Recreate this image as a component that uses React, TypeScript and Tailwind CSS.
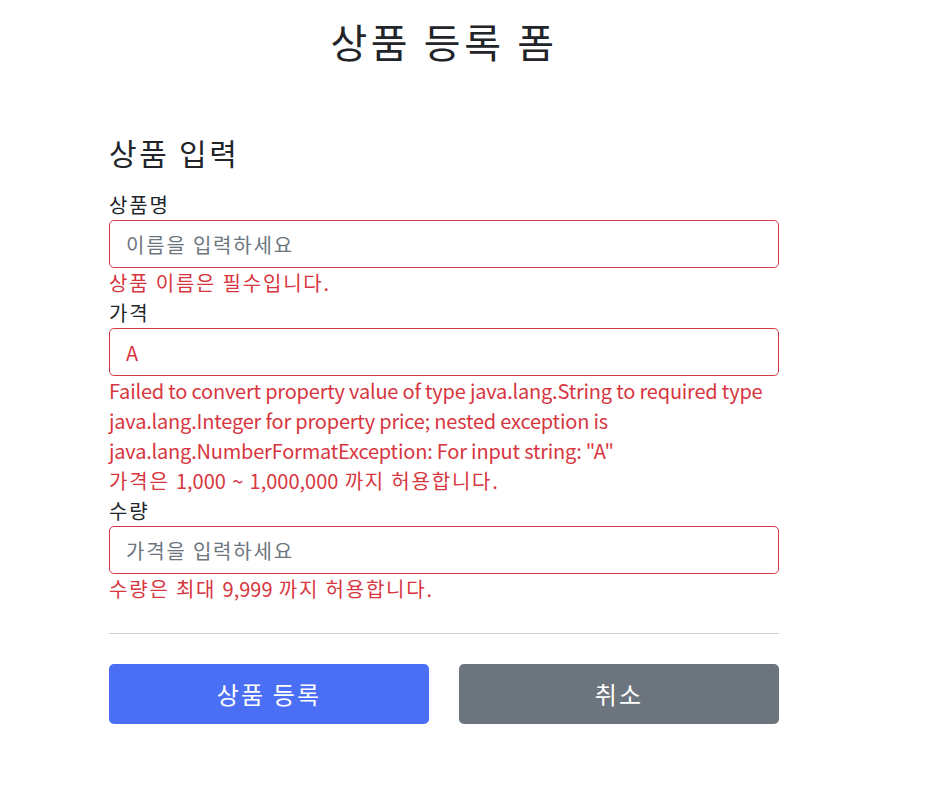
// Korean glyphs (and spaces) in the reference are wider than Noto's, so those runs get a little tracking
const HANGUL = /[\uac00-\ud7a3]/;

const K = ({ text }: { text: string }) => {
  if (!HANGUL.test(text)) return <span className="tracking-[-0.01em]">{text}</span>;
  return (
    <>
      {text.split(/([\uac00-\ud7a3 ]+)/).map((part, i) =>
        /[\uac00-\ud7a3 ]/.test(part) ? (
          <span key={i} className="tracking-[0.09em]">
            {part}
          </span>
        ) : (
          <span key={i}>{part}</span>
        )
      )}
    </>
  );
};

const fieldError = "text-[20px] leading-[30px] text-[#d7363f]";

const Field = ({
  label,
  placeholder,
  value,
  errors,
}: {
  label: string;
  placeholder: string;
  value?: string;
  errors: string[];
}) => (
  <div>
    <label className="block text-[20px] leading-[30px] text-[#212529]">
      <K text={label} />
    </label>
    <input
      className="block h-[48px] w-full rounded-[5px] border border-[#d33a45] bg-white px-[16px] text-[20px] tracking-[0.09em] text-[#d7363f] outline-none placeholder:text-[#6c757d]"
      placeholder={placeholder}
      defaultValue={value}
    />
    {errors.map((e) => (
      <div key={e} className={fieldError}>
        <K text={e} />
      </div>
    ))}
  </div>
);

export default function App() {
  return (
    <div
      className="min-h-[811px] bg-white text-[#212529]"
      style={{ fontFamily: '"Noto Sans CJK KR", "Noto Sans", sans-serif' }}
    >
      <div className="ml-[109px] w-[670px] pt-[17px]">
        <h2 className="text-center text-[40px] leading-[48px] font-normal">
          <K text="상품 등록 폼" />
        </h2>

        <h4 className="mt-[69px] text-[30px] leading-[36px] font-normal">
          <K text="상품 입력" />
        </h4>

        <div className="mt-[20px]">
          <Field label="상품명" placeholder="이름을 입력하세요" errors={["상품 이름은 필수입니다."]} />
          <Field
            label="가격"
            placeholder="가격을 입력하세요"
            value="A"
            errors={[
              'Failed to convert property value of type java.lang.String to required type java.lang.Integer for property price; nested exception is java.lang.NumberFormatException: For input string: "A"',
              "가격은 1,000 ~ 1,000,000 까지 허용합니다.",
            ]}
          />
          <Field label="수량" placeholder="가격을 입력하세요" errors={["수량은 최대 9,999 까지 허용합니다."]} />
        </div>

        <hr className="mt-[29px] border-t border-[#cfcfcf]" />

        <div className="mt-[30px] grid grid-cols-2 gap-[30px]">
          <button className="h-[60px] rounded-[5px] bg-[#4a6ff5] text-[24px] text-white">
            <K text="상품 등록" />
          </button>
          <button className="h-[60px] rounded-[5px] bg-[#6c757d] text-[24px] text-white">
            <K text="취소" />
          </button>
        </div>
      </div>
    </div>
  );
}
